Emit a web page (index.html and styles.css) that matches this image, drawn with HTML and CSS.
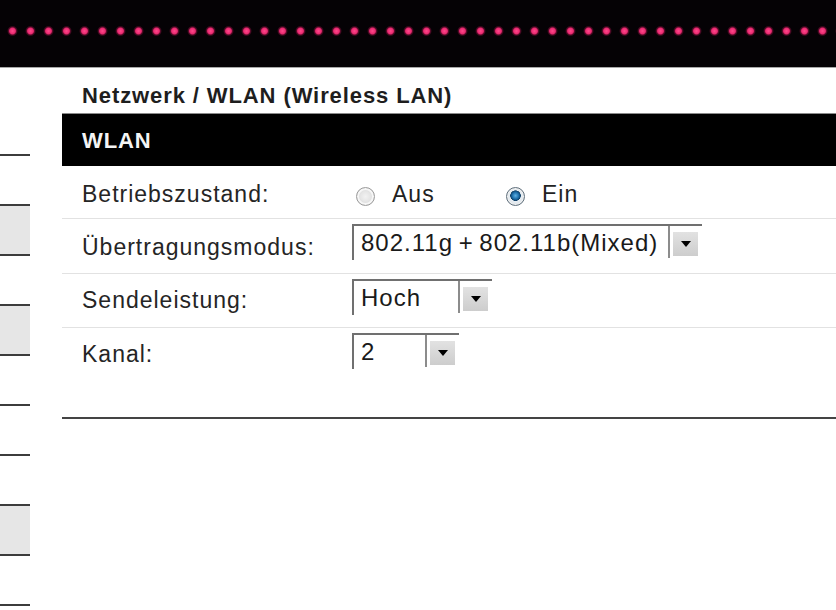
FILE: index.html
```html
<!DOCTYPE html>
<html lang="de">
<head>
<meta charset="utf-8">
<title>Netzwerk / WLAN</title>
<link rel="stylesheet" href="styles.css">
</head>
<body>
<header class="header">
  <div class="dots"></div>
</header>
<div class="layout">
  <nav class="sidebar">
    <div class="nav-item"></div>
    <div class="nav-item gray"></div>
    <div class="nav-item"></div>
    <div class="nav-item gray"></div>
    <div class="nav-item"></div>
    <div class="nav-item"></div>
    <div class="nav-item"></div>
    <div class="nav-item gray"></div>
    <div class="nav-item"></div>
    <div class="nav-item last"></div>
  </nav>
  <main class="main">
    <h1 class="title">Netzwerk / WLAN (Wireless LAN)</h1>
    <div class="bar">WLAN</div>
    <div class="form">
      <div class="row r1">
        <div class="label">Betriebszustand:</div>
        <div class="value radios">
          <span class="radio-opt"><span class="radio"></span><span class="radio-text">Aus</span></span>
          <span class="radio-opt"><span class="radio checked"></span><span class="radio-text">Ein</span></span>
        </div>
      </div>
      <div class="row r2">
        <div class="label">Übertragungsmodus:</div>
        <div class="value">
          <div class="select">
            <div class="sel-text w-mode">802.11g + 802.11b(Mixed)</div>
            <div class="sel-btn-wrap"><div class="sel-btn"><span class="tri"></span></div></div>
          </div>
        </div>
      </div>
      <div class="row r3">
        <div class="label">Sendeleistung:</div>
        <div class="value">
          <div class="select">
            <div class="sel-text w-power">Hoch</div>
            <div class="sel-btn-wrap"><div class="sel-btn"><span class="tri"></span></div></div>
          </div>
        </div>
      </div>
      <div class="row r4">
        <div class="label">Kanal:</div>
        <div class="value">
          <div class="select">
            <div class="sel-text w-chan">2</div>
            <div class="sel-btn-wrap"><div class="sel-btn"><span class="tri"></span></div></div>
          </div>
        </div>
      </div>
    </div>
  </main>
</div>
</body>
</html>
```
FILE: styles.css
```css
* { box-sizing: border-box; }
html, body { margin: 0; padding: 0; background: #fff; }
body {
  width: 836px;
  height: 610px;
  overflow: hidden;
  font-family: "Liberation Sans", Arial, sans-serif;
  color: #222;
}
.header {
  height: 68px;
  background: #050205;
  border-bottom: 1px solid #a8a8a8;
  padding-top: 26px;
}
.dots {
  height: 10px;
  background-image: radial-gradient(circle at 9.5px 5px, #ff4a8c 0, #e8286f 2.9px, rgba(180, 20, 80, 0.5) 3.9px, rgba(0,0,0,0) 5.4px);
  background-size: 18px 10px;
  background-repeat: repeat-x;
  background-position: 3px 0;
}
.layout {
  display: flex;
  gap: 32px;
}
.sidebar {
  width: 30px;
  padding-top: 86px;
  flex: none;
}
.nav-item {
  height: 50px;
  border-top: 2px solid #3c3c3c;
}
.nav-item.gray { background: #e6e6e6; }
.nav-item.last { height: 10px; }
.main {
  flex: 1;
  display: flex;
  flex-direction: column;
}
.title {
  margin: 0;
  padding: 15px 0 4px 20px;
  height: 45px;
  font-size: 22px;
  line-height: 26px;
  font-weight: bold;
  letter-spacing: 0.9px;
  color: #1e1e1e;
}
.bar {
  height: 53px;
  background: #000;
  border-top: 1px solid #8a8a8a;
  color: #f4f4f4;
  font-size: 22px;
  font-weight: bold;
  letter-spacing: 0.9px;
  display: flex;
  align-items: center;
  padding-left: 20px;
  padding-top: 2px;
}
.form {
  border-bottom: 2px solid #444;
  padding-bottom: 36px;
}
.row {
  display: flex;
  align-items: center;
  border-bottom: 1px solid #e2e2e2;
}
.r1 { height: 53px; padding-top: 4px; }
.r2 { height: 55px; }
.r2 .label { padding-top: 3px; }
.r3 { height: 54px; }
.r4 { height: 53px; border-bottom: none; }
.label {
  width: 290px;
  padding-left: 20px;
  font-size: 23px;
  letter-spacing: 1px;
  color: #252525;
  flex: none;
}
.value { display: flex; align-items: center; }
.radios { padding-top: 5px; }
.radio-opt {
  display: inline-flex;
  align-items: center;
  width: 150px;
}
.radio {
  width: 19px;
  height: 19px;
  border-radius: 50%;
  margin-left: 4px;
  border: 1px solid #9c9c9c;
  background: radial-gradient(circle at 50% 50%, #f2f2f2 0, #e4e4e4 45%, #c9c9c9 100%);
  box-shadow: inset 0 0 0 2px #f6f6f6;
}
.radio.checked {
  border-color: #5f6f7c;
  background: radial-gradient(circle at 50% 45%, #5fb2e6 0, #1a6aa6 3.5px, #0f3f66 5px, #e8eef3 5.5px, #d0d8de 100%);
  box-shadow: inset 0 0 0 1px #f0f0f0;
}
.radio-text {
  margin-left: 17px;
  font-size: 23px;
  letter-spacing: 1px;
  color: #222;
  margin-top: -5px;
}
.select {
  display: inline-flex;
  height: 36px;
  border-top: 2px solid #707070;
  border-left: 2px solid #707070;
  margin-bottom: 8px;
}
.sel-text {
  height: 32px;
  padding: 3px 0 0 7px;
  font-size: 24px;
  line-height: 28px;
  letter-spacing: 1px;
  word-spacing: -2px;
  color: #1a1a1a;
  border-right: 2px solid #8c8c8c;
  white-space: nowrap;
}
.w-mode { width: 316px; }
.w-power { width: 106px; }
.w-chan { width: 73px; }
.sel-btn-wrap {
  padding: 6px 4px 0 3px;
}
.sel-btn {
  width: 25px;
  height: 24px;
  background: linear-gradient(#e2e2e2, #cdcdcd);
  display: flex;
  align-items: center;
  justify-content: center;
}
.tri {
  width: 0;
  height: 0;
  border-left: 5px solid transparent;
  border-right: 5px solid transparent;
  border-top: 6px solid #000;
}
```
